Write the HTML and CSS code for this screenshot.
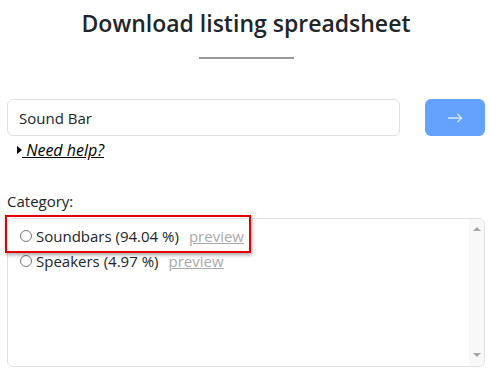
FILE: index.html
```html
<!DOCTYPE html>
<html>
<head>
<meta charset="utf-8">
<link rel="stylesheet" href="styles.css">
</head>
<body>
<div class="page">
  <h1 class="title">Download listing spreadsheet</h1>
  <div class="divider"></div>
  <div class="search-row">
    <input class="search-input" type="text" value="Sound Bar">
    <button class="go-btn"><svg width="16" height="10" viewBox="0 0 16 10"><path d="M1 5H14.5M10.5 1L14.5 5L10.5 9" fill="none" stroke="#d6e5ff" stroke-width="1.4"/></svg></button>
  </div>
  <div class="help"><span class="tri"></span><a class="help-link" href="#">&nbsp;Need help?</a></div>
  <div class="label">Category:</div>
  <div class="listbox">
    <div class="options">
      <div class="option">
        <span class="radio"></span><span class="opt-text">Soundbars (94.04 %)</span><a class="preview" href="#">preview</a>
      </div>
      <div class="option">
        <span class="radio"></span><span class="opt-text">Speakers (4.97 %)</span><a class="preview" href="#">preview</a>
      </div>
    </div>
    <div class="scrollbar">
      <span class="arrow up"></span>
      <span class="arrow down"></span>
    </div>
    <div class="highlight"></div>
  </div>
</div>
</body>
</html>
```
FILE: styles.css
```css
* { box-sizing: border-box; }
html, body { margin: 0; padding: 0; background: #fff; }
body { font-family: "Open Sans", "Noto Sans", sans-serif; color: #212529; }
.page { padding: 0 6px 0 7px; }
.title {
  margin: 0;
  padding-top: 6px;
  font-size: 23px;
  font-weight: 600;
  text-align: center;
  line-height: 34px;
  color: #212529;
}
.divider {
  width: 95px;
  height: 2px;
  background: #999;
  margin: 17px auto 0;
}
.search-row {
  display: flex;
  align-items: stretch;
  gap: 25px;
  margin-top: 40px;
}
.search-input {
  flex: 1;
  height: 37px;
  border: 1px solid #dee2e6;
  border-radius: 6px;
  padding: 0 11px;
  font: 15px "Open Sans", sans-serif;
  color: #212529;
  outline: none;
}
.go-btn {
  width: 60px;
  height: 37px;
  border: none;
  border-radius: 6px;
  background: #64a2ff;
  padding: 0;
  display: flex;
  align-items: center;
  justify-content: center;
}
.help {
  display: flex;
  align-items: center;
  margin-top: 3px;
  padding-left: 10px;
  height: 22px;
}
.tri {
  width: 0; height: 0;
  border-top: 4px solid transparent;
  border-bottom: 4px solid transparent;
  border-left: 5px solid #000;
}
.help-link {
  font-style: italic;
  color: #000;
  font-size: 16px;
  text-decoration: underline;
}
.label {
  margin-top: 30px;
  font-size: 15px;
  line-height: 20px;
}
.listbox {
  position: relative;
  display: flex;
  margin-top: 7px;
  height: 149px;
  border: 1px solid #dee2e6;
  border-radius: 6px;
}
.options {
  flex: 1;
  padding: 4px 0 0 12px;
}
.option {
  display: flex;
  align-items: center;
  height: 25px;
  font-size: 15px;
}
.radio {
  width: 12px; height: 12px;
  border: 1px solid #777;
  border-radius: 50%;
  margin-right: 4px;
}
.opt-text { color: #212529; }
.preview {
  margin-left: 10px;
  color: #aaa;
  text-decoration: underline;
}
.scrollbar {
  width: 15px;
  background: #f8f8f8;
  border-radius: 0 5px 5px 0;
  display: flex;
  flex-direction: column;
  justify-content: space-between;
  align-items: center;
  padding: 8px 0 9px;
}
.arrow {
  width: 0; height: 0;
  border-left: 4px solid transparent;
  border-right: 4px solid transparent;
}
.arrow.up { border-bottom: 4px solid #a3a3a3; }
.arrow.down { border-top: 4px solid #a3a3a3; }
.highlight {
  position: absolute;
  left: -3px;
  top: -4px;
  width: 246px;
  height: 38px;
  border: 2px solid #e50000;
  box-shadow: 1px 2px 4px rgba(0,0,0,0.35);
  pointer-events: none;
}
```
